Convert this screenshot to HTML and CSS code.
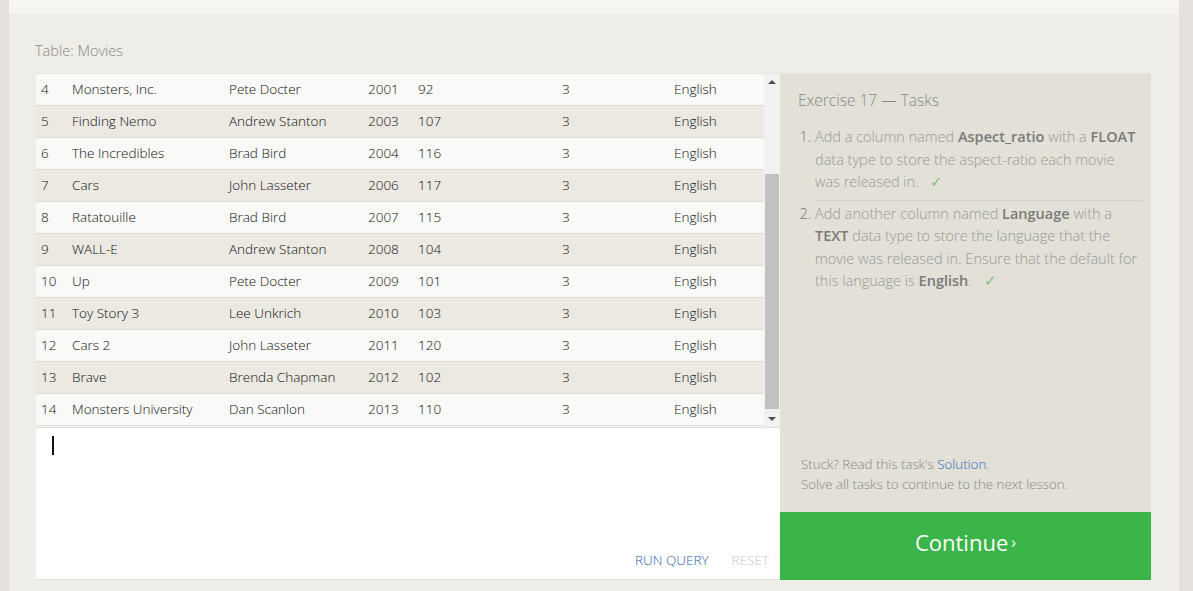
FILE: index.html
```html
<!DOCTYPE html>
<html>
<head>
<meta charset="utf-8">
<link rel="stylesheet" href="styles.css">
</head>
<body>
<div class="page">
  <div class="topstrip"></div>
  <div class="main">
    <div class="caption">Table: Movies</div>
    <div class="workspace">
      <div class="left">
        <div class="tablebox">
          <div class="tablescroll">
            <table class="data">
              <colgroup>
                <col class="c-id"><col class="c-title"><col class="c-dir"><col class="c-year"><col class="c-len"><col class="c-ar"><col class="c-lang">
              </colgroup>
              <tbody>
                <tr><td>4</td><td>Monsters, Inc.</td><td>Pete Docter</td><td>2001</td><td>92</td><td>3</td><td>English</td></tr>
                <tr><td>5</td><td>Finding Nemo</td><td>Andrew Stanton</td><td>2003</td><td>107</td><td>3</td><td>English</td></tr>
                <tr><td>6</td><td>The Incredibles</td><td>Brad Bird</td><td>2004</td><td>116</td><td>3</td><td>English</td></tr>
                <tr><td>7</td><td>Cars</td><td>John Lasseter</td><td>2006</td><td>117</td><td>3</td><td>English</td></tr>
                <tr><td>8</td><td>Ratatouille</td><td>Brad Bird</td><td>2007</td><td>115</td><td>3</td><td>English</td></tr>
                <tr><td>9</td><td>WALL-E</td><td>Andrew Stanton</td><td>2008</td><td>104</td><td>3</td><td>English</td></tr>
                <tr><td>10</td><td>Up</td><td>Pete Docter</td><td>2009</td><td>101</td><td>3</td><td>English</td></tr>
                <tr><td>11</td><td>Toy Story 3</td><td>Lee Unkrich</td><td>2010</td><td>103</td><td>3</td><td>English</td></tr>
                <tr><td>12</td><td>Cars 2</td><td>John Lasseter</td><td>2011</td><td>120</td><td>3</td><td>English</td></tr>
                <tr><td>13</td><td>Brave</td><td>Brenda Chapman</td><td>2012</td><td>102</td><td>3</td><td>English</td></tr>
                <tr><td>14</td><td>Monsters University</td><td>Dan Scanlon</td><td>2013</td><td>110</td><td>3</td><td>English</td></tr>
              </tbody>
            </table>
          </div>
          <div class="scrollbar">
            <div class="arrow up"></div>
            <div class="track"><div class="thumb"></div></div>
            <div class="arrow down"></div>
          </div>
        </div>
        <div class="editor">
          <div class="cursor"></div>
          <div class="editor-actions">
            <span class="run">RUN QUERY</span>
            <span class="reset">RESET</span>
          </div>
        </div>
      </div>
      <div class="right">
        <div class="tasks">
          <div class="tasks-title">Exercise 17 — Tasks</div>
          <ol class="task-list">
            <li>Add a column named <b>Aspect_ratio</b> with a <b>FLOAT</b> data type to store the aspect-ratio each movie was released in. <span class="check">✓</span></li>
            <li>Add another column named <b>Language</b> with a <b>TEXT</b> data type to store the language that the movie was released in. Ensure that the default for this language is <b>English</b>. <span class="check">✓</span></li>
          </ol>
          <div class="tasks-foot">
            <p>Stuck? Read this task's <a class="sol">Solution</a>.</p>
            <p>Solve all tasks to continue to the next lesson.</p>
          </div>
        </div>
        <div class="continue">Continue<span class="chev">›</span></div>
      </div>
    </div>
  </div>
</div>
</body>
</html>
```
FILE: styles.css
```css
html, body {
  margin: 0;
  padding: 0;
}
body {
  background: #e4e1dd;
  font-family: "Open Sans", "Liberation Sans", sans-serif;
  width: 1193px;
  height: 591px;
  overflow: hidden;
}
.page {
  margin-left: 9px;
  width: 1170px;
  height: 591px;
  background: #efede7;
  display: flex;
  flex-direction: column;
}
.topstrip {
  height: 14px;
  background: #f6f5f1;
  flex: none;
}
.main {
  padding: 27px 27px 0 27px;
}
.caption {
  font-size: 14.5px;
  color: #888;
  line-height: 20px;
  height: 32px;
  font-weight: 300;
  margin-left: -1px;
}
.workspace {
  display: flex;
  height: 507px;
}
.left {
  width: 744px;
  display: flex;
  flex-direction: column;
}
.tablebox {
  height: 354px;
  display: flex;
  border-top: 1px solid #e6e4de;
  box-sizing: border-box;
  background: #f9f9f8;
}
.tablescroll {
  flex: 1;
  overflow: hidden;
}
table.data {
  border-collapse: collapse;
  width: 100%;
  table-layout: fixed;
  font-size: 13.5px;
  font-weight: 300;
  color: #111;
}
.c-id { width: 31px; }
.c-title { width: 157px; }
.c-dir { width: 139px; }
.c-year { width: 50px; }
.c-len { width: 144px; }
.c-ar { width: 112px; }
.c-lang { width: auto; }
table.data td {
  height: 30px;
  padding: 0 0 1px 5px;
  border-bottom: 1px solid #dddbd4;
  white-space: nowrap;
  overflow: hidden;
}
table.data tr:nth-child(odd) { background: #f9f9f8; }
table.data tr:nth-child(even) { background: #ebe9e2; }
.scrollbar {
  width: 16px;
  background: #f1f1f1;
  display: flex;
  flex-direction: column;
  flex: none;
}
.arrow {
  height: 17px;
  position: relative;
  flex: none;
}
.arrow::after {
  content: "";
  position: absolute;
  left: 4px;
  width: 0;
  height: 0;
  border-left: 4px solid transparent;
  border-right: 4px solid transparent;
}
.arrow.up::after {
  top: 6px;
  border-bottom: 4px solid #505050;
}
.arrow.down::after {
  top: 7px;
  border-top: 4px solid #505050;
}
.track {
  flex: 1;
  padding-top: 83px;
}
.thumb {
  margin: 0 1px;
  height: 235px;
  background: #c1c1c1;
}
.editor {
  flex: 1;
  background: #fff;
  border-top: 1px solid #e0ded8;
  border-bottom: 1px solid #e2e0da;
  display: flex;
  flex-direction: column;
  justify-content: space-between;
}
.cursor {
  width: 2px;
  height: 19px;
  background: #111;
  margin: 8px 0 0 16px;
}
.editor-actions {
  display: flex;
  justify-content: flex-end;
  gap: 23px;
  padding: 0 11px 10px 0;
  font-size: 13.5px;
  font-weight: 300;
  line-height: 18px;
}
.run { color: #2c63ad; }
.reset { color: #c8c8c8; }
.right {
  width: 371px;
  display: flex;
  flex-direction: column;
}
.tasks {
  flex: 1;
  background: #e2e0d7;
  padding: 17px 8px 18px 18px;
  display: flex;
  flex-direction: column;
  color: #999;
}
.tasks-title {
  font-size: 15.5px;
  font-weight: 300;
  color: #888;
  line-height: 20px;
}
.task-list {
  margin: 13px 0 0 0;
  padding: 0 0 0 17px;
  font-size: 14.5px;
  font-weight: 300;
  line-height: 22.5px;
  color: #999;
}
.task-list li {
  padding: 3px 0 6px;
}
.task-list li + li {
  border-top: 1px solid #d4d2c9;
  padding-top: 2px;
}
.task-list li::marker {
  color: #777;
}
.task-list b {
  font-weight: 600;
  color: #7a7a7a;
}
.check {
  color: #7dc27d;
  margin-left: 8px;
}
.tasks-foot {
  margin-top: auto;
  padding-left: 3px;
  font-size: 13.3px;
  font-weight: 300;
  color: #888;
  line-height: 20px;
}
.tasks-foot p { margin: 0; }
.sol { color: #2c6ec0; }
.continue {
  height: 68px;
  box-sizing: border-box;
  padding-bottom: 8px;
  background: #3bb44a;
  color: #fff;
  font-size: 22px;
  font-weight: 400;
  display: flex;
  align-items: center;
  justify-content: center;
  flex: none;
}
.chev {
  font-size: 16px;
  margin-left: 3px;
}
```
